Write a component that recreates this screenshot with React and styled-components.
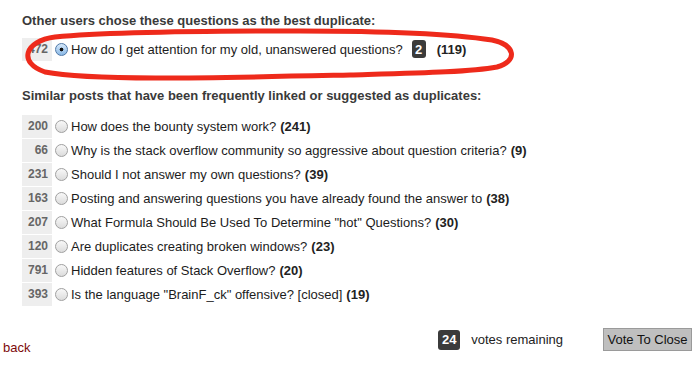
import React from "react";
import styled, { createGlobalStyle } from "styled-components";

const GlobalStyle = createGlobalStyle`
  html, body {
    margin: 0;
    padding: 0;
    background: #fff;
  }
  body {
    font-family: "Liberation Sans", Arial, sans-serif;
    font-size: 13px;
    color: #222;
  }
`;

const best = [{ id: 1, votes: 472, title: "How do I get attention for my old, unanswered questions?", badge: 2, links: 119 }];

const similar = [
  { id: 2, votes: 200, title: "How does the bounty system work?", links: 241 },
  { id: 3, votes: 66, title: "Why is the stack overflow community so aggressive about question criteria?", links: 9 },
  { id: 4, votes: 231, title: "Should I not answer my own questions?", links: 39 },
  { id: 5, votes: 163, title: "Posting and answering questions you have already found the answer to", links: 38 },
  { id: 6, votes: 207, title: "What Formula Should Be Used To Determine \"hot\" Questions?", links: 30 },
  { id: 7, votes: 120, title: "Are duplicates creating broken windows?", links: 23 },
  { id: 8, votes: 791, title: "Hidden features of Stack Overflow?", links: 20 },
  { id: 9, votes: 393, title: "Is the language \"BrainF_ck\" offensive? [closed]", links: 19 },
];

const App = () => {
  return (
    <Page>
      <GlobalStyle />
      <Content>
        <Heading>Other users chose these questions as the best duplicate:</Heading>
        <List>
          {best.map((q) => (
            <QuestionRow key={q.id} q={q} checked />
          ))}
        </List>
        <Heading $second>Similar posts that have been frequently linked or suggested as duplicates:</Heading>
        <List>
          {similar.map((q) => (
            <QuestionRow key={q.id} q={q} />
          ))}
        </List>
      </Content>
      <Footer>
        <BackLink href="#">back</BackLink>
        <VoteArea>
          <Badge $large>24</Badge>
          <Remaining>votes remaining</Remaining>
          <VoteButton>Vote To Close</VoteButton>
        </VoteArea>
      </Footer>
      <Scribble viewBox="0 0 700 365" width="700" height="365">
        <path
          d="M300 31 C 200 31, 110 32, 55 37 C 24 41, 18 63, 45 72 C 90 81, 210 78, 350 75 C 420 73, 470 72, 497 67 C 518 61, 516 45, 492 40 C 445 33, 370 31, 300 31 Z"
          fill="none"
          stroke="#ee2a1b"
          strokeWidth="5"
          strokeLinecap="round"
        />
      </Scribble>
    </Page>
  );
};

const QuestionRow = ({ q, checked }) => (
  <Row>
    <VoteCell>{q.votes}</VoteCell>
    <Radio type="radio" name="dupe" defaultChecked={checked} />
    <Title>
      {q.title}
      {q.badge ? <Badge>{q.badge}</Badge> : null}
      <Links $spaced={!!q.badge}>({q.links})</Links>
    </Title>
  </Row>
);

export default App;

const Page = styled.div`
  position: relative;
  width: 700px;
  height: 365px;
  overflow: hidden;
`;

const Content = styled.div`
  padding: 13px 0 0 22px;
`;

const Heading = styled.div`
  font-weight: bold;
  color: #3a3a3a;
  line-height: 16px;
  margin-top: ${(p) => (p.$second ? "27px" : "0")};
  margin-bottom: ${(p) => (p.$second ? "10px" : "8px")};
`;

const List = styled.div`
  display: flex;
  flex-direction: column;
`;

const Row = styled.div`
  display: flex;
  align-items: center;
  height: 24px;
`;

const VoteCell = styled.div`
  width: 30px;
  height: 23px;
  background: #eeeeee;
  color: #666;
  font-weight: bold;
  font-size: 12px;
  padding-right: 4px;
  box-sizing: border-box;
  display: flex;
  align-items: center;
  justify-content: flex-end;
`;

const Radio = styled.input`
  appearance: none;
  -webkit-appearance: none;
  width: 13px;
  height: 13px;
  margin: 0 3px 0 3px;
  border-radius: 50%;
  border: 1px solid #a0a0a0;
  background: linear-gradient(#f8f8f8, #dcdcdc);
  box-sizing: border-box;
  &:checked {
    border-color: #4f78a8;
    background: radial-gradient(circle, #111 0 1.6px, transparent 2.2px),
      linear-gradient(#d6e8fa, #8ab9e6);
  }
`;

const Title = styled.span`
  display: flex;
  align-items: center;
  white-space: nowrap;
  color: #1c1c1c;
`;

const Links = styled.b`
  margin-left: ${(p) => (p.$spaced ? "11px" : "4px")};
  color: #222;
`;

const Badge = styled.span`
  display: inline-flex;
  align-items: center;
  justify-content: center;
  background: #3b3b3b;
  color: #fff;
  font-weight: bold;
  border-radius: 3px;
  height: ${(p) => (p.$large ? "20px" : "18px")};
  min-width: ${(p) => (p.$large ? "22px" : "14px")};
  margin-left: ${(p) => (p.$large ? "0" : "9px")};
  font-size: 13px;
`;

const Footer = styled.div`
  position: absolute;
  left: 0;
  right: 0;
  bottom: 0;
  height: 50px;
  display: flex;
  justify-content: space-between;
  align-items: flex-start;
`;

const BackLink = styled.a`
  color: #7d0a0a;
  text-decoration: none;
  margin: 19px 0 0 3px;
  line-height: 28px;
`;

const VoteArea = styled.div`
  display: flex;
  align-items: center;
  margin: 13px 8px 0 0;
`;

const Remaining = styled.span`
  margin-left: 11px;
  margin-right: 40px;
  color: #222;
`;

const VoteButton = styled.button`
  font-family: "Liberation Sans", Arial, sans-serif;
  font-size: 13px;
  background: #bfbfbf;
  border: 1px solid #9a9a9a;
  color: #111;
  width: 89px;
  height: 23px;
  padding: 0;
`;

const Scribble = styled.svg`
  position: absolute;
  left: 0;
  top: 0;
  pointer-events: none;
`;
